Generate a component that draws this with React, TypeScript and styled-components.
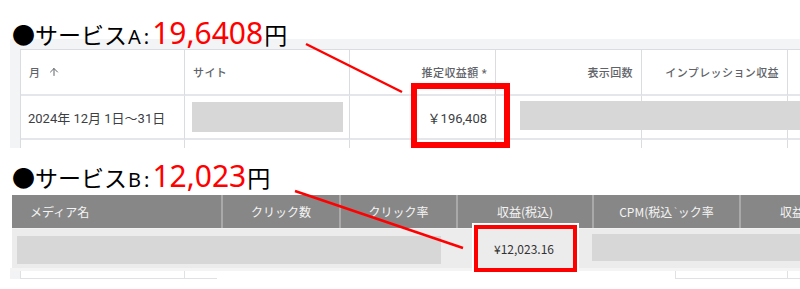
import React from "react"
import styled, { createGlobalStyle } from "styled-components"
import { ArrowUp } from "lucide-react"

const JP = `"Noto Sans CJK JP", "Noto Sans", sans-serif`

const GlobalStyle = createGlobalStyle`
  html, body {
    margin: 0;
    padding: 0;
    background: #fff;
  }
  body {
    width: 800px;
    height: 289px;
    overflow: hidden;
  }
`

const colsA = [164, 165, 146, 146, 146, 146]
const colsB = [209, 118, 117, 136, 147, 136]

export default function App() {
  return (
    <StyledPage>
      <GlobalStyle />

      <Title $height={39} $pad={18}>
        <Label>●サービス</Label>
        <Letter>A</Letter>
        <Colon>:</Colon>
        <Amount>19,6408</Amount>
        <Label>円</Label>
      </Title>

      <StyledFrameA>
        <StyledGridA>
          <HeadCellA>
            月<ArrowUp size={12} strokeWidth={2} style={{ marginLeft: 8 }} />
          </HeadCellA>
          <HeadCellA>サイト</HeadCellA>
          <HeadCellA $right>推定収益額 *</HeadCellA>
          <HeadCellA $right>表示回数</HeadCellA>
          <HeadCellA $right>インプレッション収益</HeadCellA>
          <HeadCellA />

          <DataCellA>2024年 12月 1日〜31日</DataCellA>
          <DataCellA>
            <Redact $w={151} $h={30} />
          </DataCellA>
          <DataCellA $right>
            ￥196,408
            <HighlightA />
          </DataCellA>
          <DataCellA>
            <FloatingRedact />
          </DataCellA>
          <DataCellA />
          <DataCellA />

          {colsA.map((_, i) => (
            <StubCellA key={i} />
          ))}
        </StyledGridA>
      </StyledFrameA>

      <Title $height={47} $pad={13}>
        <Label>●サービス</Label>
        <Letter>B</Letter>
        <Colon>:</Colon>
        <Amount>12,023</Amount>
        <Label>円</Label>
      </Title>

      <StyledFrameB>
        <StyledHeadB>
          <HeadCellB $left>メディア名</HeadCellB>
          <HeadCellB $divider>クリック数</HeadCellB>
          <HeadCellB $divider>クリック率</HeadCellB>
          <HeadCellB $divider>収益(税込)</HeadCellB>
          <HeadCellB $divider>
            CPM(税込<Glitch>`</Glitch>ック率
          </HeadCellB>
          <HeadCellB $divider>収益(税込)</HeadCellB>
        </StyledHeadB>
        <StyledBodyB>
          <BodyCellB $span={3} $padTop={7} $padLeft={5}>
            <Redact $w={424} $h={28} />
          </BodyCellB>
          <BodyCellB $center>
            ¥12,023.16
            <HighlightB />
          </BodyCellB>
          <BodyCellB $span={2} $padTop={5}>
            <Redact $h={27} />
          </BodyCellB>
        </StyledBodyB>
      </StyledFrameB>

      <StyledFragment>
        <FragCell $bg="#f1f3f4" />
        <FragCell $line $edge />
        <FragCell $line $edge />
        <FragCell />
        <FragCell $line $edge />
        <FragCell $line $edge />
      </StyledFragment>

      <StyledArrows viewBox="0 0 800 289" width={800} height={289}>
        <line x1={306} y1={44} x2={402} y2={92} stroke="#f00" strokeWidth={2.5} />
        <line x1={295} y1={191} x2={463} y2={248} stroke="#f00" strokeWidth={2.5} />
      </StyledArrows>
    </StyledPage>
  )
}

const StyledPage = styled.div`
  position: relative;
  width: 800px;
  height: 289px;
  overflow: hidden;
  background: #fff;
`

const Title = styled.div<{ $height: number; $pad: number }>`
  height: ${(p) => p.$height}px;
  box-sizing: border-box;
  padding: ${(p) => p.$pad}px 0 0 12px;
  display: flex;
  align-items: baseline;
  white-space: nowrap;
  position: relative;
  z-index: 1;
  color: #000;
`

const Label = styled.span`
  font-family: ${JP};
  font-size: 23px;
  line-height: 1;
`

const Letter = styled.span`
  font-family: "Noto Sans", sans-serif;
  font-size: 20px;
  line-height: 1;
  margin-left: 1px;
`

const Colon = styled.span`
  font-family: "Noto Sans", sans-serif;
  font-size: 20px;
  line-height: 1;
  margin: 0 3px 0 3px;
`

const Amount = styled.span`
  font-family: "Noto Sans", sans-serif;
  font-size: 30px;
  line-height: 1;
  color: #ff0000;
  margin-right: 1px;
`

const StyledFrameA = styled.div`
  width: 900px;
  margin-left: 10px;
  background: #f3f4f6;
  padding: 10px 0 0 10px;
`

const StyledGridA = styled.div`
  display: grid;
  grid-template-columns: ${colsA.map((c) => `${c}px`).join(" ")};
  background: #fff;
  border-left: 1px solid #dadce0;
  border-top: 1px solid #dadce0;
  font-family: Roboto, ${JP};
`

const HeadCellA = styled.div<{ $right?: boolean }>`
  height: 46px;
  box-sizing: border-box;
  padding: 0 8px;
  border-right: 1px solid #dadce0;
  border-bottom: 2px solid #e4e6e9;
  display: flex;
  align-items: center;
  justify-content: ${(p) => (p.$right ? "flex-end" : "flex-start")};
  font-size: 11px;
  font-weight: 500;
  letter-spacing: 0.4px;
  color: #5f6368;
  white-space: nowrap;
`

const DataCellA = styled.div<{ $right?: boolean }>`
  position: relative;
  height: 44px;
  box-sizing: border-box;
  padding: 0 8px 0 7px;
  border-right: 1px solid #dadce0;
  border-bottom: 2px solid #e4e6e9;
  display: flex;
  align-items: center;
  justify-content: ${(p) => (p.$right ? "flex-end" : "flex-start")};
  font-size: 13px;
  color: #3c4043;
  white-space: nowrap;
`

const StubCellA = styled.div`
  height: 8px;
  border-right: 1px solid #dadce0;
`

const Redact = styled.div<{ $w?: number; $h: number }>`
  width: ${(p) => (p.$w ? `${p.$w}px` : "100%")};
  height: ${(p) => p.$h}px;
  background: #d7d7d7;
  flex-shrink: 0;
`

const FloatingRedact = styled.div`
  position: absolute;
  left: 24px;
  top: 5px;
  width: 320px;
  height: 29px;
  background: #d7d7d7;
  z-index: 1;
`

const HighlightA = styled.div`
  position: absolute;
  left: 61px;
  top: -13px;
  width: 99px;
  height: 65px;
  box-sizing: border-box;
  border: 6px solid #ff0000;
  z-index: 2;
`

const StyledFrameB = styled.div`
  margin-left: 12px;
  width: 900px;
  font-family: ${JP};
`

const StyledHeadB = styled.div`
  display: grid;
  grid-template-columns: ${colsB.map((c) => `${c}px`).join(" ")};
  height: 33px;
  background: #878787;
`

const HeadCellB = styled.div<{ $left?: boolean; $divider?: boolean }>`
  box-sizing: border-box;
  border-left: ${(p) => (p.$divider ? "2px solid #a9a9a9" : "none")};
  padding-left: ${(p) => (p.$left ? 18 : 0)}px;
  display: flex;
  align-items: center;
  justify-content: ${(p) => (p.$left ? "flex-start" : "center")};
  font-size: 12px;
  color: #f4f4f4;
  white-space: nowrap;
`

const Glitch = styled.span`
  font-size: 9px;
  margin: 0 -1px 0 1px;
  color: #ddd;
`

const StyledBodyB = styled.div`
  display: grid;
  grid-template-columns: ${colsB.map((c) => `${c}px`).join(" ")};
  height: 40px;
  background: #ececec;
  border-top: 1px solid #f2f2f2;
  box-sizing: border-box;
`

const BodyCellB = styled.div<{
  $span?: number
  $padTop?: number
  $padLeft?: number
  $center?: boolean
}>`
  position: relative;
  grid-column: span ${(p) => p.$span ?? 1};
  box-sizing: border-box;
  padding: ${(p) => p.$padTop ?? 0}px 0 0 ${(p) => p.$padLeft ?? 0}px;
  display: flex;
  align-items: ${(p) => (p.$center ? "center" : "flex-start")};
  justify-content: ${(p) => (p.$center ? "center" : "flex-start")};
  font-size: 12px;
  color: #333;
`

const HighlightB = styled.div`
  position: absolute;
  left: 18px;
  top: -4px;
  width: 103px;
  height: 47px;
  box-sizing: border-box;
  border: 4px solid #ff0000;
  box-shadow: 0 0 0 2px #fff;
  z-index: 2;
`

const StyledFragment = styled.div`
  display: grid;
  grid-template-columns: 10px 164px 33px 458px 112px 13px;
  margin-left: 10px;
  height: 8px;
  border-top: 3px solid #f4f4f4;
`

const FragCell = styled.div<{ $bg?: string; $line?: boolean; $edge?: boolean }>`
  box-sizing: border-box;
  background: ${(p) => p.$bg ?? "#fff"};
  border-bottom: ${(p) => (p.$line ? "1px solid #dfe1e4" : "none")};
  border-left: ${(p) => (p.$edge ? "1px solid #dfe1e4" : "none")};
`

const StyledArrows = styled.svg`
  position: absolute;
  left: 0;
  top: 0;
  pointer-events: none;
  z-index: 5;
`
